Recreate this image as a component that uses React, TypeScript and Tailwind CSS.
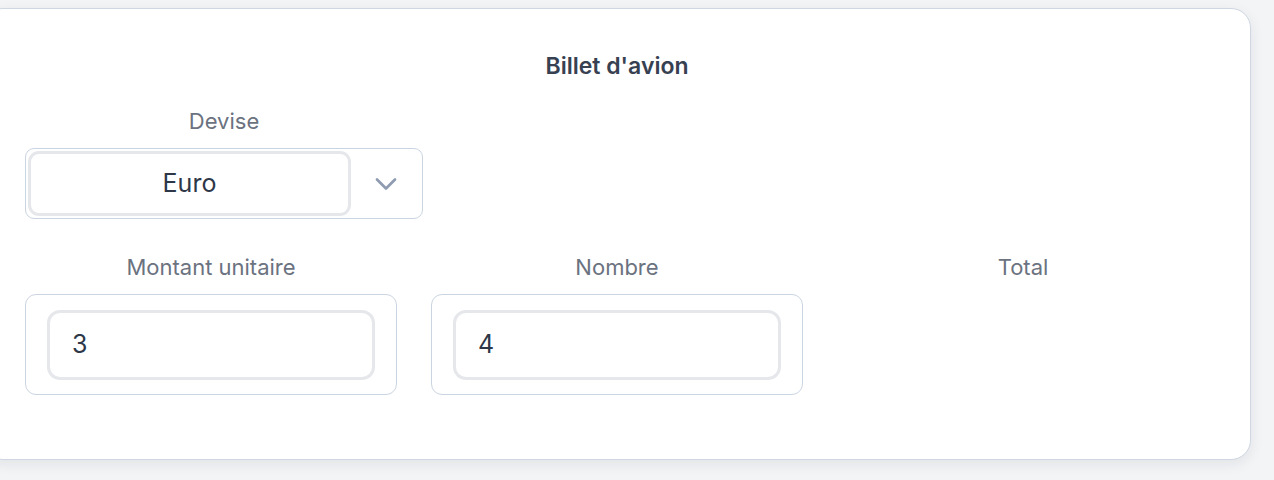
import { ChevronDown } from 'lucide-react';

const fields = [
  { id: 'montant', label: 'Montant unitaire', value: '3' },
  { id: 'nombre', label: 'Nombre', value: '4' },
];

export default function App() {
  return (
    <div className="min-h-screen w-full overflow-hidden bg-[#f3f4f6] pt-2 font-['Inter',sans-serif]">
      <div className="-ml-[17px] w-[1268px] rounded-[20px] border border-[#cfd7e3] bg-white px-[41px] pb-[64px] pt-[41px] shadow-[0_4px_14px_rgba(15,23,42,0.08)]">
        <h2 className="text-center text-[23px] leading-[32px] font-semibold text-[#374151]">Billet d'avion</h2>

        {/* Devise */}
        <div className="mt-[24px] w-[398px]">
          <div className="text-center text-[22px] leading-[30px] text-[#6b7280]">Devise</div>
          <div className="mt-[12px] flex h-[71px] items-center rounded-[9px] border border-[#cbd5e1] p-[2px] pr-[18px]">
            <div className="flex h-full w-[323px] items-center justify-center rounded-[11px] border-[3px] border-[#e5e7eb] text-[25px] text-[#2d3748]">
              Euro
            </div>
            <ChevronDown className="ml-auto h-[36px] w-[36px] text-[#8e9bb0]" strokeWidth={1.8} />
          </div>
        </div>

        {/* Amount row */}
        <div className="mt-[33px] grid grid-cols-3 gap-[34px]">
          {fields.map((f) => (
            <div key={f.id}>
              <div className="text-center text-[22px] leading-[30px] text-[#6b7280]">{f.label}</div>
              <div className="mt-[12px] flex h-[101px] items-center rounded-[11px] border border-[#cbd5e1] px-[21px]">
                <div className="flex h-[70px] w-full items-center rounded-[13px] border-[3px] border-[#e5e7eb] px-[22px] text-[25px] text-[#2d3748]">
                  {f.value}
                </div>
              </div>
            </div>
          ))}
          <div>
            <div className="text-center text-[22px] leading-[30px] text-[#6b7280]">Total</div>
          </div>
        </div>
      </div>
    </div>
  );
}
